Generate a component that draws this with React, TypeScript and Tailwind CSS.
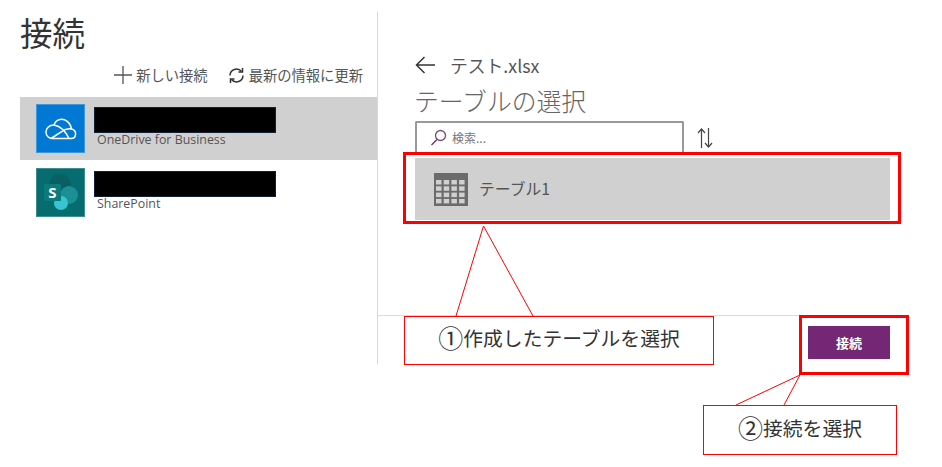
const font = { jp: 'font-["Noto_Sans_CJK_JP",sans-serif]' };

const connections = [
  { id: 'onedrive', label: 'OneDrive for Business', selected: true },
  { id: 'sharepoint', label: 'SharePoint', selected: false },
];

function OneDriveIcon() {
  return (
    <div className="w-[49px] h-[49px] bg-[#0078d4] border border-[#3f97dd] flex items-center justify-center shrink-0">
      <svg width="32" height="22" viewBox="0 0 32 22" fill="none" stroke="#fff" strokeWidth="1.500">
        <path d="M7 20.500h19c5.500 0 6.500-8 .5-9.500C25.500 4.500 20 .5 15 1.500 12 2 10 4 9 7 4 7 .8 10.500 1 14.500c.2 3.500 3 6 6 6z" />
        <path d="M9 7c5 1 11 5 15 13.500M26.500 11c-4-.8-7 .5-9.500 2.500L6 20.500" />
      </svg>
    </div>
  );
}

function SharePointIcon() {
  return (
    <div className="w-[49px] h-[49px] bg-[#076c6f] border border-[#3f8f92] shrink-0">
      <svg width="47" height="47" viewBox="0 0 47 47">
        <circle cx="23" cy="16" r="11" fill="#0a5f63" />
        <circle cx="32" cy="26" r="9" fill="#1b8f94" />
        <circle cx="24" cy="34" r="7" fill="#37c6d0" />
        <rect x="7" y="15" width="17" height="17" rx="1" fill="#0a7a7d" />
        <text x="15.500" y="29" textAnchor="middle" fontSize="15" fontWeight="700" fill="#fff" fontFamily="Open Sans, sans-serif">S</text>
      </svg>
    </div>
  );
}

function TableIcon() {
  return (
    <svg width="34" height="33" viewBox="0 0 34 33" className="shrink-0">
      <rect width="34" height="33" fill="#6b6b6b" />
      {[0, 1, 2, 3].flatMap((row) =>
        [0, 1, 2, 3].map((col) => (
          <rect key={`${row}-${col}`} x={2 + col * 7.7} y={7 + row * 6.3} width="5.500" height="4.500" fill="#d0d0d0" />
        ))
      )}
    </svg>
  );
}

function SearchIcon() {
  return (
    <svg width="17" height="17" viewBox="0 0 17 17" fill="none" strokeWidth="1.300" className="shrink-0">
      <circle cx="10.500" cy="6.500" r="5" stroke="#7a4a7a" />
      <path d="M7 10.500 1.500 16" stroke="#742774" />
    </svg>
  );
}

function SortIcon() {
  return (
    <svg width="16" height="20" viewBox="0 0 16 20" fill="none" stroke="#444" strokeWidth="1.200" className="ml-[13px] mt-[2px] shrink-0">
      <path d="M4.500 20V1M1 5l3.500-4L8 5" />
      <path d="M11.500 0v19M8 15l3.500 4 3.500-4" />
    </svg>
  );
}

export default function App() {
  return (
    <div className={`relative w-[942px] h-[467px] bg-white overflow-hidden ${font.jp}`}>
      <div className="flex pt-3 pl-5">
        {/* Connections */}
        <div className="w-[358px] h-[352px] border-r border-[#d8d8d8] shrink-0">
          <h1 className="text-[32.500px] leading-[40px] text-[#333]">接続</h1>
          <div className="flex justify-end items-center gap-[20px] pr-[14px] mt-[10px] h-[26px] text-[14.300px] text-[#555]">
            <span className="flex items-center gap-1">
              <svg width="18" height="18" viewBox="0 0 18 18" stroke="#555" strokeWidth="1.300">
                <path d="M9 0v18M0 9h18" />
              </svg>
              新しい接続
            </span>
            <span className="flex items-center gap-1">
              <svg width="17" height="17" viewBox="0 0 17 17" fill="none" stroke="#333" strokeWidth="1.500">
                <path d="M2 8.500A6.500 6.500 0 0 1 13.500 4.500M15 8.500A6.500 6.500 0 0 1 3.500 12.500" />
                <path d="M14.500 1v4h-4M2.500 16v-4h4" />
              </svg>
              最新の情報に更新
            </span>
          </div>
          <ul className="mt-[9px]">
            {connections.map((item) => (
              <li key={item.id} className={`flex gap-[9px] pl-4 pt-[7px] ${item.selected ? 'bg-[#d0d0d0] h-[63px] mb-[1px]' : 'h-[71px]'}`}>
                {item.id === 'onedrive' ? <OneDriveIcon /> : <SharePointIcon />}
                <div className="pt-[3px]">
                  <div className="w-[182px] h-[26px] bg-black border border-[#10203a]" />
                  <div className="pl-[3px] text-[12.400px] leading-[14px] text-[#555] font-['Open_Sans',sans-serif]">{item.label}</div>
                </div>
              </li>
            ))}
          </ul>
        </div>

        {/* Table picker */}
        <div className="w-[512px] h-[352px] flex flex-col">
          <div className="pl-[37px] flex-1">
            <div className="flex items-center gap-[15px] mt-[39px] h-[28px] text-[17.800px] text-[#555]">
              <svg width="20" height="18" viewBox="0 0 20 18" fill="none" stroke="#333" strokeWidth="1.500">
                <path d="M20 9H1.500M9.500 1 1.500 9l8 8" />
              </svg>
              テスト.xlsx
            </div>
            <h2 className="text-[24.800px] leading-[36px] mt-[3px] -ml-px text-[#666] font-light">テーブルの選択</h2>
            <div className="flex items-center mt-[3px] h-[31px]">
              <div className="w-[269px] h-[31px] flex items-center gap-[5px] pl-[13px] border-2 border-b-0 border-[#999] rounded-t-[2px] text-[12px] text-[#777]">
                <SearchIcon />
                検索...
              </div>
              <SortIcon />
            </div>
            <div className="flex items-center gap-[11px] w-[475px] h-[62px] mt-[6px] pl-[19px] bg-[#d0d0d0] text-[15.800px] text-[#555]">
              <TableIcon />
              テーブル1
            </div>
          </div>
          <div className="h-[49px] border-t border-[#dcdcdc] w-[422px]" />
        </div>
      </div>

      {/* Callouts */}
      <svg className="absolute inset-0" width="942" height="467" fill="none" stroke="#f00">
        <path d="M456 316 483.500 226 533 316" />
        <path d="M736 405 800 375 M784 405 800 375" />
      </svg>
      <div className="absolute left-[403px] top-[152px] w-[498px] h-[72px] border-[3px] border-[#f00]" />
      <div className="absolute left-[404px] top-[316px] w-[310px] h-[49px] pb-[6px] border border-[#f00] bg-white flex items-center justify-center text-[19.800px] text-[#333]">
        <span className="text-[25px] leading-none">①</span>作成したテーブルを選択
      </div>
      <div className="absolute left-[808px] top-[326px] w-[82px] h-[33px] bg-[#742774] flex items-center justify-center text-[13px] font-bold text-white">
        接続
      </div>
      <div className="absolute left-[799px] top-[315px] w-[110px] h-[60px] border-[3px] border-[#f00]" />
      <div className="absolute left-[703px] top-[405px] w-[194px] h-[50px] pb-[5px] border border-[#f00] bg-white flex items-center justify-center text-[19.800px] text-[#333]">
        <span className="text-[25px] leading-none">②</span>接続を選択
      </div>
    </div>
  );
}
